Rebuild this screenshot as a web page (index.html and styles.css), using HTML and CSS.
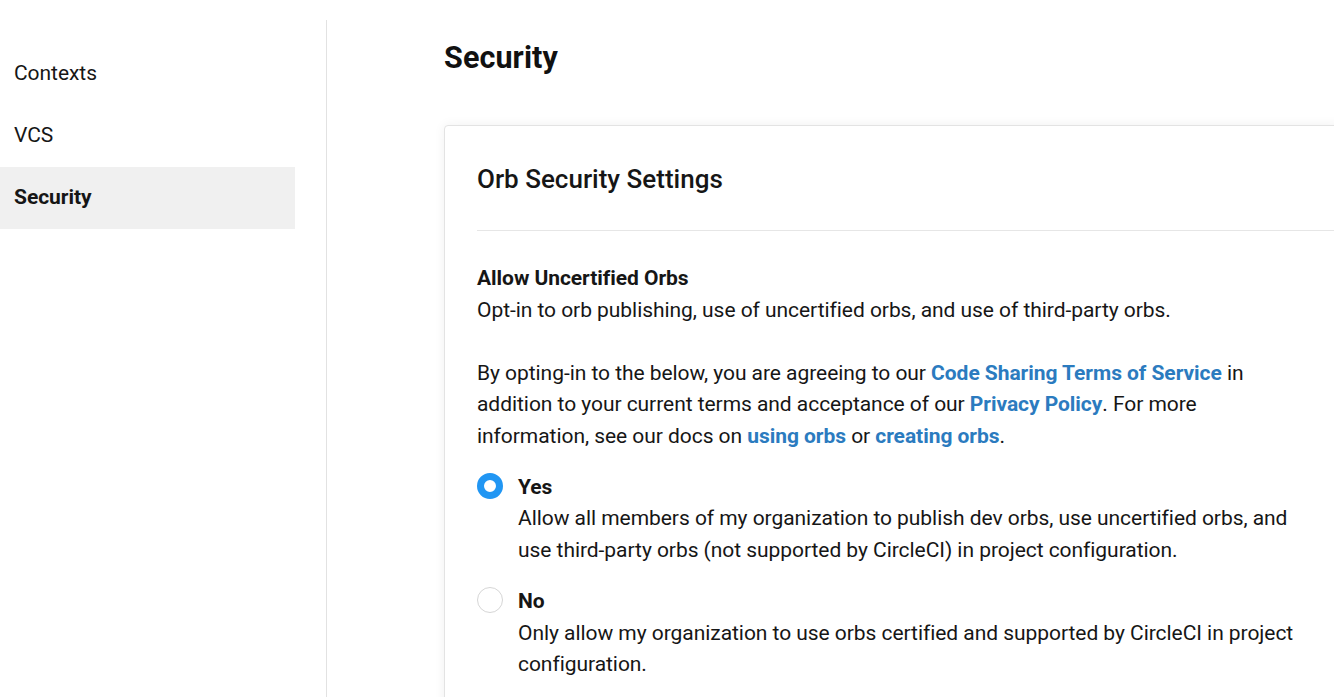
FILE: index.html
```html
<!DOCTYPE html>
<html lang="en">
<head>
<meta charset="utf-8">
<title>Security</title>
<link rel="stylesheet" href="styles.css">
</head>
<body>
<div class="layout">
  <aside class="sidebar">
    <nav class="nav">
      <a class="nav-item">Contexts</a>
      <a class="nav-item">VCS</a>
      <a class="nav-item active">Security</a>
    </nav>
  </aside>
  <main class="main">
    <h1 class="page-title">Security</h1>
    <section class="card">
      <h2 class="card-title">Orb Security Settings</h2>
      <hr class="divider">
      <h3 class="setting-title">Allow Uncertified Orbs</h3>
      <p class="text">Opt-in to orb publishing, use of uncertified orbs, and use of third-party orbs.</p>
      <p class="text gap">By opting-in to the below, you are agreeing to our <a class="link">Code Sharing Terms of Service</a> in addition to your current terms and acceptance of our <a class="link">Privacy Policy</a>. For more information, see our docs on <a class="link">using orbs</a> or <a class="link">creating orbs</a>.</p>
      <div class="options">
        <label class="option">
          <span class="radio checked"></span>
          <span class="option-body">
            <span class="option-label">Yes</span>
            <span class="option-desc">Allow all members of my organization to publish dev orbs, use uncertified orbs, and use third-party orbs (not supported by CircleCI) in project configuration.</span>
          </span>
        </label>
        <label class="option">
          <span class="radio"></span>
          <span class="option-body">
            <span class="option-label">No</span>
            <span class="option-desc">Only allow my organization to use orbs certified and supported by CircleCI in project configuration.</span>
          </span>
        </label>
      </div>
    </section>
  </main>
</div>
</body>
</html>
```

FILE: styles.css
```css
html, body {
  margin: 0;
  padding: 0;
  overflow: hidden;
  background: #ffffff;
}
body {
  font-family: Roboto, "Liberation Sans", Arial, sans-serif;
  color: #161616;
  font-size: 21px;
  line-height: 31.5px;
  letter-spacing: -0.05px;
}
.layout {
  display: flex;
  padding-top: 20px;
  height: 677px;
}
.sidebar {
  flex: 0 0 327px;
  box-sizing: border-box;
  border-right: 1px solid #e2e2e2;
  padding: 23px 31px 0 0;
}
.nav {
  display: flex;
  flex-direction: column;
}
.nav-item {
  display: block;
  padding: 15.25px 14px;
  color: #161616;
  text-decoration: none;
}
.nav-item.active {
  background: #f0f0f0;
  font-weight: 700;
}
.main {
  flex: 1;
  padding: 14.5px 0 0 117px;
  min-width: 0;
}
.page-title {
  margin: 0 0 45.5px;
  font-size: 30.5px;
  line-height: 45px;
  font-weight: 700;
  color: #111111;
  letter-spacing: 0.1px;
}
.card {
  width: 900px;
  box-sizing: border-box;
  border: 1px solid #e3e3e3;
  border-radius: 4px;
  box-shadow: 0 0 12px rgba(0, 0, 0, 0.06);
  padding: 33px 32px 32px;
  background: #fff;
}
.card-title {
  margin: 0;
  font-size: 26px;
  line-height: 40.5px;
  font-weight: 500;
  color: #161616;
  letter-spacing: 0;
}
.divider {
  border: 0;
  border-top: 1px solid #e6e6e6;
  margin: 30.5px -40px 32px 0;
}
.setting-title {
  margin: 0;
  font-size: 21px;
  line-height: 31.5px;
  font-weight: 700;
}
.text {
  margin: 0;
}
.text.gap {
  margin-top: 31.5px;
}
.link {
  color: #2b7bbf;
  font-weight: 700;
  text-decoration: none;
}
.options {
  display: flex;
  flex-direction: column;
  gap: 20px;
  margin-top: 19.5px;
}
.option {
  display: flex;
  gap: 15px;
  align-items: flex-start;
}
.radio {
  flex: 0 0 26px;
  width: 26px;
  height: 26px;
  box-sizing: border-box;
  border: 1px solid #d6d6d6;
  border-radius: 50%;
  margin-top: 1px;
  background: #fff;
}
.radio.checked {
  border: 7px solid #2196f3;
}
.option-body {
  display: flex;
  flex-direction: column;
}
.option-label {
  font-weight: 700;
}
```
